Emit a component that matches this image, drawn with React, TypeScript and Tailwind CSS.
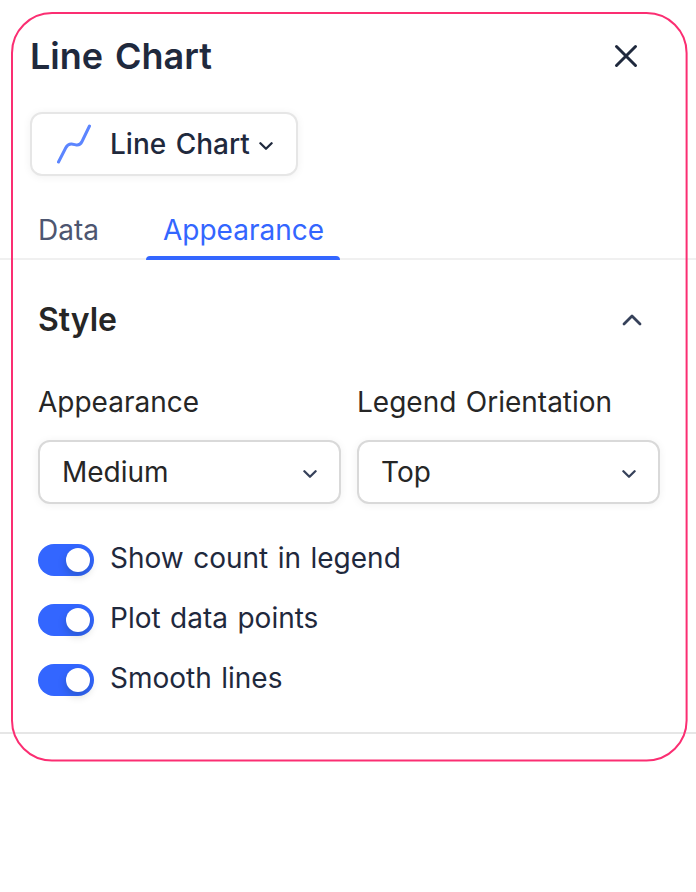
import { useState } from "react";

function Chevron({ className, up = false }: { className: string; up?: boolean }) {
  return up ? (
    <svg className={className} viewBox="0 0 20 12" fill="none" stroke="currentColor" strokeWidth="2.8" strokeLinecap="round" strokeLinejoin="round">
      <path d="M2 10L10 2L18 10" />
    </svg>
  ) : (
    <svg className={className} viewBox="0 0 14 10" fill="none" stroke="currentColor" strokeWidth="2.3" strokeLinecap="round" strokeLinejoin="round">
      <path d="M1.4 2.2L7 7.7L12.6 2.2" />
    </svg>
  );
}

function SelectField({ label, value }: { label: string; value: string }) {
  return (
    <div className="flex w-[303px] shrink-0 flex-col">
      <span className="h-10 text-[28px] leading-10 whitespace-nowrap text-[#262626]">{label}</span>
      <button className="mt-[18px] flex h-16 items-center justify-between rounded-[12px] border-2 border-[#d9d9d9] bg-white pr-[22.5px] pl-[22px] text-[28px] text-[#262626] shadow-[0_1px_8px_rgba(0,0,0,0.06)]">
        <span className="leading-10">{value}</span>
        <Chevron className="mt-[3px] h-[10px] w-[14px] text-[#36415a]" />
      </button>
    </div>
  );
}

function Toggle({ label }: { label: string }) {
  const [on, setOn] = useState(true);
  return (
    <div className="flex h-10 items-center gap-4">
      <button
        role="switch"
        aria-checked={on}
        aria-label={label}
        onClick={() => setOn(!on)}
        className={`mt-[3px] flex h-8 w-14 items-center rounded-full px-1 ${on ? "justify-end bg-[#3366ff]" : "justify-start bg-[#bfbfbf]"}`}
      >
        <span className="h-6 w-6 rounded-full bg-white shadow-[0_4px_8px_rgba(0,35,11,0.2)]" />
      </button>
      <span className="text-[28px] leading-10 text-[#1f293d]">{label}</span>
    </div>
  );
}

export default function App() {
  return (
    <div className="relative h-[892px] w-[696px] overflow-hidden bg-white font-['Inter','Liberation_Sans',sans-serif] [word-spacing:1.6px]">
      <header className="flex h-28 items-start justify-between pt-8 pr-[58px] pl-[30px]">
        <h1 className="text-[36px] leading-[48px] font-semibold text-[#1f293d] [word-spacing:2.8px]">Line Chart</h1>
        <button aria-label="Close" className="mt-3 text-[#1f293d]">
          <svg className="h-6 w-6" viewBox="0 0 24 24" fill="none" stroke="currentColor" strokeWidth="3" strokeLinecap="round">
            <path d="M2.5 2.5L21.5 21.5M21.5 2.5L2.5 21.5" />
          </svg>
        </button>
      </header>

      <button className="ml-[30px] flex h-16 w-[268px] items-center rounded-[12px] border-2 border-[#e6e6e6] bg-white pl-[24px] text-[#1f293d] shadow-[0_1px_8px_rgba(0,0,0,0.06)] [word-spacing:2px]">
        <svg className="h-10 w-9" viewBox="0 0 36 40" fill="none" stroke="#5c85ff" strokeWidth="3" strokeLinecap="round" strokeLinejoin="round">
          <path d="M2.5 38L9.8 23.8Q11.8 19.8 15.5 20L20 20.9Q24 21.6 26 17.5L33.5 2" />
        </svg>
        <span className="ml-[18px] text-[28px] leading-10 font-medium whitespace-nowrap">Line Chart</span>
        <Chevron className="mt-[3px] ml-[9.5px] h-[10px] w-[14px]" />
      </button>

      <nav className="mt-6 flex h-[60px] items-start border-b-2 border-[#f0f0f0] pl-[38px] text-[28px] leading-10">
        <button className="mt-[10px] w-[108px] text-left text-[#4d5670]">Data</button>
        <button className="flex h-[60px] w-[194px] flex-col items-center pt-[10px] text-[#3366ff]">
          <span className="pl-px">Appearance</span>
          <span className="mt-[6px] h-1 w-full shrink-0 rounded-t-[4px] bg-[#3366ff]" />
        </button>
      </nav>

      <main className="h-[474px] border-b-2 border-[#e6e6e6] pt-10 pr-9 pl-[38px]">
        <div className="flex h-10 items-center justify-between pr-[18px]">
          <h2 className="text-[32px] leading-10 font-semibold text-[#262626]">Style</h2>
          <Chevron up className="h-3 w-5 text-[#36415a]" />
        </div>
        <div className="mt-[42px] flex gap-4">
          <SelectField label="Appearance" value="Medium" />
          <SelectField label="Legend Orientation" value="Top" />
        </div>
        <div className="mt-[34px] flex flex-col gap-5">
          <Toggle label="Show count in legend" />
          <Toggle label="Plot data points" />
          <Toggle label="Smooth lines" />
        </div>
      </main>

      <svg className="pointer-events-none absolute inset-0 h-full w-full" viewBox="0 0 696 892" fill="none">
        <rect x="12" y="13" width="674.6" height="747.4" rx="40" stroke="#fb2e72" strokeWidth="2" />
      </svg>
    </div>
  );
}
